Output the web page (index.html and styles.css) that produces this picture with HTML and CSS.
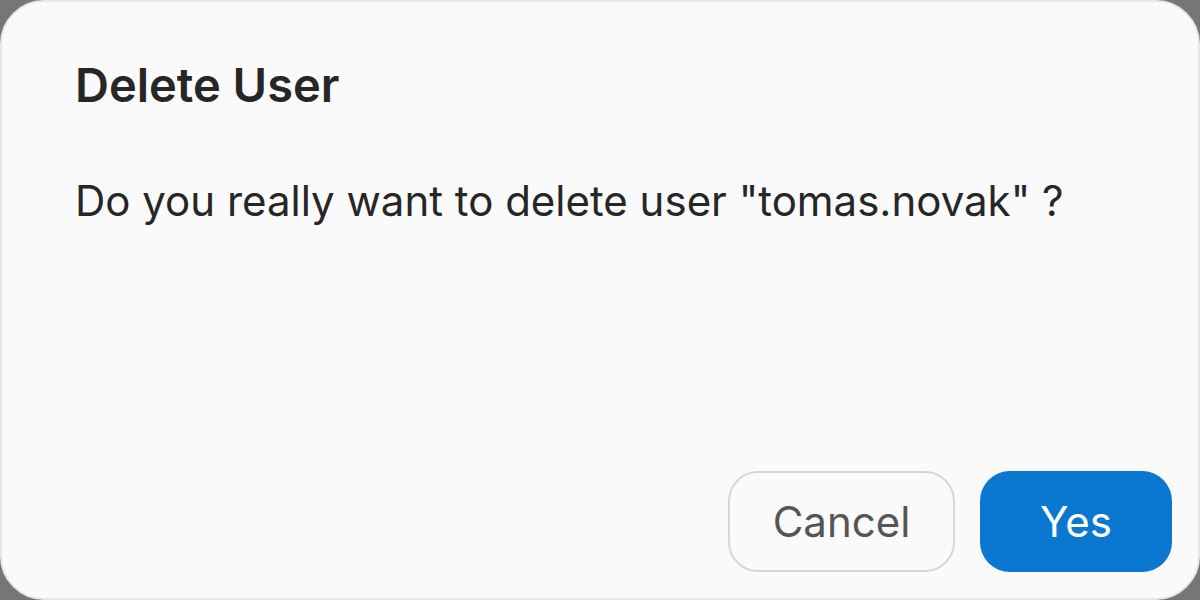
FILE: index.html
```html
<!DOCTYPE html>
<html lang="en">
<head>
  <meta charset="UTF-8">
  <meta name="viewport" content="width=device-width, initial-scale=1.0">
  <title>Delete User</title>
  <link rel="stylesheet" href="styles.css">
</head>
<body>
  <div class="dialog">
    <h1 class="dialog-title">Delete User</h1>
    <p class="dialog-text">Do you really want to delete user "tomas.novak" ?</p>
    <div class="dialog-actions">
      <button class="btn btn-cancel">Cancel</button>
      <button class="btn btn-primary">Yes</button>
    </div>
  </div>
</body>
</html>
```

FILE: styles.css
```css
html, body {
  margin: 0;
  height: 100%;
}

body {
  font-family: Inter, "Noto Sans", Arial, sans-serif;
  background-color: #767676;
}

.dialog {
  box-sizing: border-box;
  height: 600px;
  display: flex;
  flex-direction: column;
  padding: 55px 26px 26px 73px;
  background-color: #fafafa;
  border: 2px solid #e8e8e8;
  border-radius: 44px;
}

.dialog-title {
  margin: 0;
  font-size: 47px;
  line-height: 56px;
  font-weight: 600;
  color: #262626;
}

.dialog-text {
  margin: 63px 0 0;
  font-size: 42px;
  line-height: 50px;
  color: #262626;
}

.dialog-actions {
  margin-top: auto;
  display: flex;
  justify-content: flex-end;
  gap: 25px;
}

.btn {
  box-sizing: border-box;
  height: 101px;
  font-family: inherit;
  font-size: 42px;
  border-radius: 30px;
  cursor: pointer;
}

.btn-cancel {
  width: 227px;
  background-color: #fafafa;
  border: 2px solid #d6d6d6;
  color: #555;
}

.btn-primary {
  width: 192px;
  background-color: #0a78d0;
  border: none;
  color: #fff;
}
```
